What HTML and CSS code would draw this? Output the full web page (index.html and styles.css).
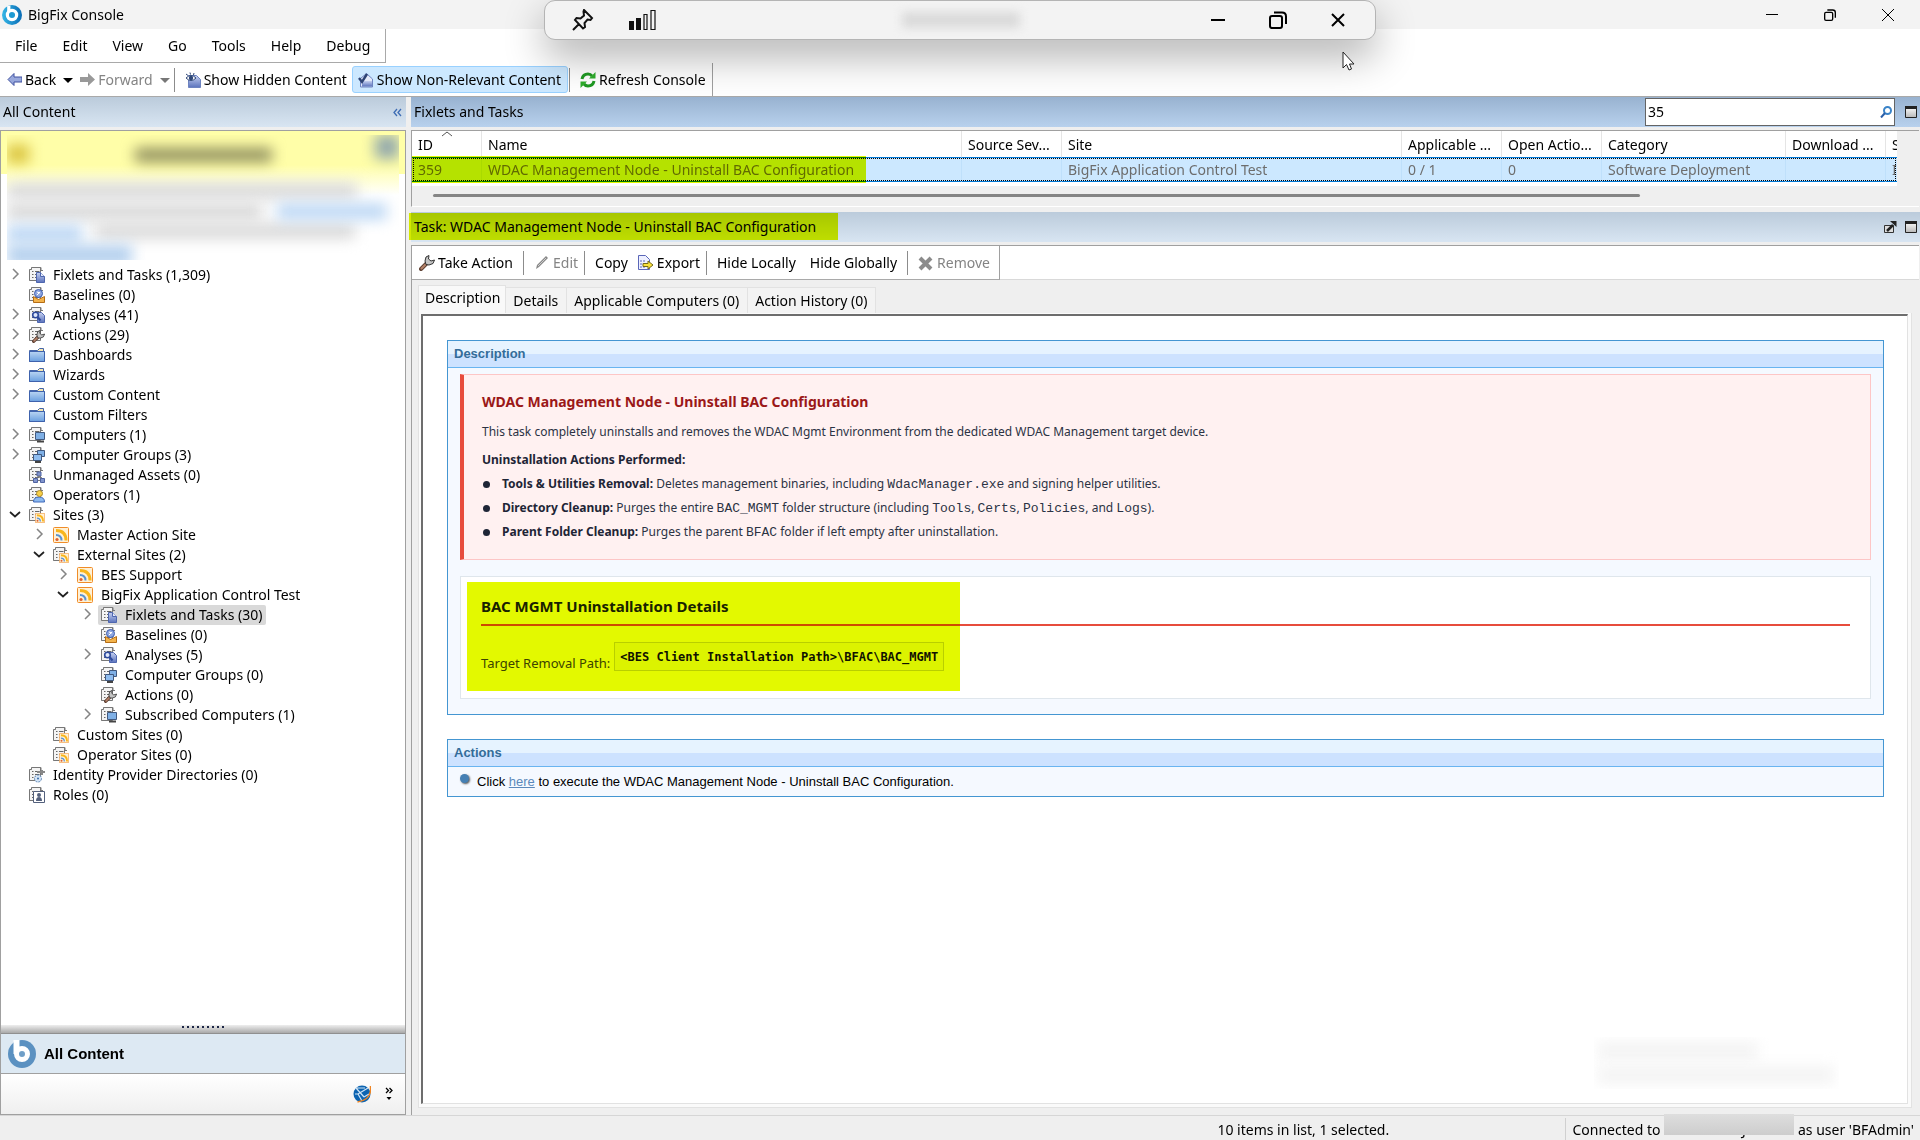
FILE: index.html
```html
<!DOCTYPE html>
<html lang="en">
<head>
<meta charset="utf-8">
<title>BigFix Console</title>
<link rel="stylesheet" href="styles.css">
</head>
<body>
<svg class="sprite" aria-hidden="true">
  <defs>
    <linearGradient id="g-blue" x1="0" y1="0" x2="0" y2="1"><stop offset="0" stop-color="#b9d5f3"/><stop offset="1" stop-color="#6a9fdf"/></linearGradient>
    <linearGradient id="g-page" x1="0" y1="0" x2="0" y2="1"><stop offset="0" stop-color="#c5d0f0"/><stop offset="1" stop-color="#5b73bd"/></linearGradient>
    <linearGradient id="g-logo" x1="0" y1="0" x2="1" y2="0"><stop offset="0" stop-color="#35b6e6"/><stop offset="1" stop-color="#0a6cb5"/></linearGradient>
    <linearGradient id="g-win" x1="0" y1="0" x2="0" y2="1"><stop offset="0" stop-color="#fff"/><stop offset="1" stop-color="#b8b8b8"/></linearGradient>
  </defs>
  <symbol id="list" viewBox="0 0 16 16">
    <path d="M1 14V2.500H3V.5h9v3h2" fill="none" stroke="#777"/>
    <path d="M.5 2.500h2v-2h9v13H.5z" fill="#f4f4f4" stroke="#777"/>
    <path d="M3 4.500h1.500M6 4.500h4.500M3 7.500h1.500M6 7.500h4.500M3 10.500h1.500M6 10.500h4.500" stroke="#666"/>
  </symbol>
  <symbol id="fixlet" viewBox="0 0 16 16"><use href="#list"/><path d="M7.500 5.500h4l4 4v6h-8z" fill="url(#g-page)" stroke="#4e66ae"/><path d="M11.500 5.500v4h4" fill="#e5ebfb" stroke="#4e66ae"/></symbol>
  <symbol id="baseline" viewBox="0 0 16 16"><use href="#list"/><circle cx="9.500" cy="6.500" r="4" fill="#8ea6df" stroke="#3e5eb0"/><path d="M8 5l3 1M8 8l3-3" stroke="#fff"/><path d="M4.500 9.500l5 3 6-3v6h-11z" fill="#f3b34b" stroke="#b56d15"/></symbol>
  <symbol id="analysis" viewBox="0 0 16 16"><use href="#list"/><path d="M8.500 5.500h4l3 3v7h-7z" fill="url(#g-page)" stroke="#4e66ae"/><circle cx="6.500" cy="8" r="2.800" fill="#dfe8fb" stroke="#2f4b9c" stroke-width="1.600"/><path d="M8.500 10l3 3.500" stroke="#2f4b9c" stroke-width="2"/></symbol>
  <symbol id="wrench" viewBox="0 0 16 16"><path d="M2 14l6-6" stroke="#5d3f31" stroke-width="4" stroke-linecap="round"/><path d="M2.500 13.500l5-5" stroke="#b5826a" stroke-width="2" stroke-linecap="round"/><path d="M7 9.500L6 6l1-4 3-1.500L9.500 4l2.500 2 3.500-1L14 8.500l-4 1.500z" fill="#c4c4c4" stroke="#333"/></symbol>
  <symbol id="action" viewBox="0 0 16 16"><use href="#list"/><use href="#wrench" x="3" y="3" width="13" height="13"/></symbol>
  <symbol id="folder" viewBox="0 0 16 16"><path d="M.5 3.500h8l2-2h4v3h1v10H.5z" fill="#f5e6b0" stroke="#4465a8"/><path d="M.5 4.500h15v10H.5z" fill="url(#g-blue)" stroke="#3e62ad"/></symbol>
  <symbol id="computer" viewBox="0 0 16 16"><use href="#list"/><path d="M6.500 5.500h9v7h-9z" fill="#7fb0e6" stroke="#41597f"/><path d="M8 14.500h7" stroke="#444" stroke-width="2"/></symbol>
  <symbol id="group" viewBox="0 0 16 16"><use href="#list"/><path d="M8.500 3.500h7v6h-7z" fill="#7fb0e6" stroke="#41597f"/><path d="M4.500 7.500h8v6h-8z" fill="#8fbdf0" stroke="#41597f"/><path d="M6 15h6" stroke="#444" stroke-width="2"/></symbol>
  <symbol id="asset" viewBox="0 0 16 16"><use href="#list"/><path d="M8 5h4v4H8zM4.500 11.500h4v4h-4zM11.500 11.500h4v4h-4z" fill="#8094cd" stroke="#5064a2"/><path d="M10 9v2M7 11l3-2 3 2" stroke="#777" fill="none"/></symbol>
  <symbol id="operator" viewBox="0 0 16 16"><use href="#list"/><path d="M4.500 15q0-5 5.500-5t5.500 5z" fill="#8cb9ef" stroke="#3f69ba"/><circle cx="10.500" cy="6.500" r="3" fill="#f8cf45" stroke="#a8892c"/></symbol>
  <symbol id="feed" viewBox="0 0 16 16"><rect x=".5" y=".5" width="15" height="15" rx="1" fill="#fff1d6" stroke="#f08c28"/><path d="M3 3.500q10 0 10 10" stroke="#f9b61b" stroke-width="3" fill="none"/><path d="M3 8q5.500 0 5.500 5.500" stroke="#5b93cf" stroke-width="2" fill="none"/><circle cx="4" cy="12.500" r="1.600" fill="#df6030"/></symbol>
  <symbol id="site" viewBox="0 0 16 16"><use href="#list"/><use href="#feed" x="6" y="6" width="10" height="10"/></symbol>
  <symbol id="directory" viewBox="0 0 16 16"><use href="#list"/><path d="M8 5h8M13 3v5" stroke="#888" stroke-width="2"/><circle cx="9" cy="11.500" r="3.500" fill="#d5e5f7" stroke="#557fb0" stroke-dasharray="2 1"/><circle cx="9" cy="11.500" r="1" fill="#3a6ca8"/></symbol>
  <symbol id="role" viewBox="0 0 16 16"><use href="#list"/><path d="M4.500 4.500h11v11h-11z" fill="#fff" stroke="#53607c"/><circle cx="10" cy="8" r="2" fill="#53607c"/><path d="M7 14q0-4 3-4t3 4z" fill="#53607c"/></symbol>
  <symbol id="right" viewBox="0 0 18 18"><path d="M7 4l5 5-5 5" fill="none" stroke="#858585" stroke-width="1.500"/></symbol>
  <symbol id="down" viewBox="0 0 18 18"><path d="M4 7l5 4.500L14 7" fill="none" stroke="#222" stroke-width="1.700"/></symbol>
  <symbol id="logo" viewBox="0 0 28 28"><circle cx="14" cy="14" r="14" fill="url(#g-logo)"/><path d="M9.500 1v13" stroke="#fff" stroke-width="4.500"/><circle cx="14" cy="14" r="6.500" fill="#1f9ad2" stroke="#fff" stroke-width="4.500"/></symbol>
  <symbol id="logo2" viewBox="0 0 28 28"><circle cx="14" cy="14" r="14" fill="#5b91c1"/><path d="M8.500 0v14" stroke="#fff" stroke-width="6"/><circle cx="14" cy="14" r="5.500" fill="#6f9fc8" stroke="#fff" stroke-width="5"/></symbol>
  <symbol id="eye-page" viewBox="0 0 16 16"><path d="M3.500 3.500h8l4 4v8h-12z" fill="url(#g-page)" stroke="#6d83c0"/><path d="M1 6q5-5 10 0-5 5-10 0z" fill="#fff" stroke="#2f4778"/><circle cx="6" cy="6" r="2.200" fill="#2f4778"/><path d="M1 2l2 1.500M5 .5l.5 2M9 1l-.5 2" stroke="#2f4778"/></symbol>
  <symbol id="check-page" viewBox="0 0 16 16"><path d="M2.500 6.500l6-5 6 5.500v8h-12z" fill="#e4eaf9" stroke="#6d83c0"/><path d="M4 9h10v5.500H4z" fill="url(#g-page)"/><path d="M1 6l3 4 5-8" fill="none" stroke="#2e4374" stroke-width="2.400"/></symbol>
  <symbol id="refresh" viewBox="0 0 16 16"><path d="M2 7q1-5 6-5 2.500 0 4 2M14 9q-1 5-6 5-2.500 0-4-2" fill="none" stroke="#1f9a22" stroke-width="3"/><path d="M9 6.500h6.500V0zM7 9.500H.5V16z" fill="#2fae2c"/></symbol>
  <symbol id="window" viewBox="0 0 12 12"><path d="M.5.5h11v11H.5z" fill="url(#g-win)" stroke="#222"/><path d="M0 1.500h12" stroke="#222" stroke-width="3"/></symbol>
  <symbol id="restore" viewBox="0 0 18 18"><rect x="1" y="5" width="12" height="12" rx="2" fill="none" stroke="currentColor" stroke-width="2"/><path d="M5 1.500h8q4 0 4 4V13" fill="none" stroke="currentColor" stroke-width="2"/></symbol>
  <symbol id="close" viewBox="0 0 14 14"><path d="M1 1l12 12M13 1L1 13" fill="none" stroke="currentColor" stroke-width="2"/></symbol>
</svg>

<header class="titlebar">
  <svg class="app-logo"><use href="#logo"/></svg>
  <span class="app-name">BigFix Console</span>
  <div class="caption">
    <button aria-label="Minimize"><svg width="12" height="12"><path d="M0 5.500h12" stroke="#000"/></svg></button>
    <button aria-label="Restore"><svg width="12" height="12"><use href="#restore"/></svg></button>
    <button aria-label="Close"><svg width="12" height="12" viewBox="0 0 12 12"><path d="M0 0l12 12M12 0L0 12" stroke="#000"/></svg></button>
  </div>
</header>

<nav class="menu">
  <button>File</button><button>Edit</button><button>View</button><button>Go</button><button>Tools</button><button>Help</button><button>Debug</button>
</nav>

<div class="toolrow">
  <div class="toolbar">
    <button class="back"><svg class="i15"><path d="M1 7.500L7 1.500V5h8v5H7v3.500z" fill="#98a8dc" stroke="#3f51a0"/></svg>Back<svg class="caret"><path d="M0 1h10L5 6z"/></svg></button>
    <button class="forward" disabled><svg class="i15"><path d="M15 7.500L8 1v4H0v5h8v4z" fill="#999"/></svg>Forward<svg class="caret"><path d="M0 1h10L5 6z" fill="#777"/></svg></button>
    <i class="sep"></i>
    <button><svg class="i16"><use href="#eye-page"/></svg>Show Hidden Content</button>
    <button class="on"><svg class="i16"><use href="#check-page"/></svg>Show Non-Relevant Content</button>
    <i class="sep"></i>
    <button><svg class="i16"><use href="#refresh"/></svg>Refresh Console</button>
  </div>
</div>

<main class="panes">
  <aside class="side">
    <div class="pane-head">
      <h2>All Content</h2>
      <button aria-label="Collapse"><svg width="9" height="9"><path d="M4 1L1 4.500 4 8M8 1L5 4.500 8 8" fill="none" stroke="#3d6cb4" stroke-width="1.300"/></svg></button>
    </div>
    <div class="side-panel">
      <div class="notice">
        <div class="smear">
          <i class="warn"></i><i class="heading"></i><i class="badge"></i>
          <i class="t1"></i><i class="t2"></i><i class="t3"></i><i class="l1"></i><i class="l2"></i><i class="l3"></i>
        </div>
      </div>
      <ul class="tree">
        <li><div class="node"><svg class="arrow"><use href="#right"/></svg><span><svg class="i16"><use href="#fixlet"/></svg>Fixlets and Tasks (1,309)</span></div></li>
        <li><div class="node leaf"><span><svg class="i16"><use href="#baseline"/></svg>Baselines (0)</span></div></li>
        <li><div class="node"><svg class="arrow"><use href="#right"/></svg><span><svg class="i16"><use href="#analysis"/></svg>Analyses (41)</span></div></li>
        <li><div class="node"><svg class="arrow"><use href="#right"/></svg><span><svg class="i16"><use href="#action"/></svg>Actions (29)</span></div></li>
        <li><div class="node"><svg class="arrow"><use href="#right"/></svg><span><svg class="i16"><use href="#folder"/></svg>Dashboards</span></div></li>
        <li><div class="node"><svg class="arrow"><use href="#right"/></svg><span><svg class="i16"><use href="#folder"/></svg>Wizards</span></div></li>
        <li><div class="node"><svg class="arrow"><use href="#right"/></svg><span><svg class="i16"><use href="#folder"/></svg>Custom Content</span></div></li>
        <li><div class="node leaf"><span><svg class="i16"><use href="#folder"/></svg>Custom Filters</span></div></li>
        <li><div class="node"><svg class="arrow"><use href="#right"/></svg><span><svg class="i16"><use href="#computer"/></svg>Computers (1)</span></div></li>
        <li><div class="node"><svg class="arrow"><use href="#right"/></svg><span><svg class="i16"><use href="#group"/></svg>Computer Groups (3)</span></div></li>
        <li><div class="node leaf"><span><svg class="i16"><use href="#asset"/></svg>Unmanaged Assets (0)</span></div></li>
        <li><div class="node leaf"><span><svg class="i16"><use href="#operator"/></svg>Operators (1)</span></div></li>
        <li><div class="node"><svg class="arrow"><use href="#down"/></svg><span><svg class="i16"><use href="#site"/></svg>Sites (3)</span></div>
          <ul>
            <li><div class="node"><svg class="arrow"><use href="#right"/></svg><span><svg class="i16"><use href="#feed"/></svg>Master Action Site</span></div></li>
            <li><div class="node"><svg class="arrow"><use href="#down"/></svg><span><svg class="i16"><use href="#site"/></svg>External Sites (2)</span></div>
              <ul>
                <li><div class="node"><svg class="arrow"><use href="#right"/></svg><span><svg class="i16"><use href="#feed"/></svg>BES Support</span></div></li>
                <li><div class="node"><svg class="arrow"><use href="#down"/></svg><span><svg class="i16"><use href="#feed"/></svg>BigFix Application Control Test</span></div>
                  <ul>
                    <li><div class="node"><svg class="arrow"><use href="#right"/></svg><span class="selected"><svg class="i16"><use href="#fixlet"/></svg>Fixlets and Tasks (30)</span></div></li>
                    <li><div class="node leaf"><span><svg class="i16"><use href="#baseline"/></svg>Baselines (0)</span></div></li>
                    <li><div class="node"><svg class="arrow"><use href="#right"/></svg><span><svg class="i16"><use href="#analysis"/></svg>Analyses (5)</span></div></li>
                    <li><div class="node leaf"><span><svg class="i16"><use href="#group"/></svg>Computer Groups (0)</span></div></li>
                    <li><div class="node leaf"><span><svg class="i16"><use href="#action"/></svg>Actions (0)</span></div></li>
                    <li><div class="node"><svg class="arrow"><use href="#right"/></svg><span><svg class="i16"><use href="#computer"/></svg>Subscribed Computers (1)</span></div></li>
                  </ul>
                </li>
              </ul>
            </li>
            <li><div class="node leaf"><span><svg class="i16"><use href="#site"/></svg>Custom Sites (0)</span></div></li>
            <li><div class="node leaf"><span><svg class="i16"><use href="#site"/></svg>Operator Sites (0)</span></div></li>
          </ul>
        </li>
        <li><div class="node leaf"><span><svg class="i16"><use href="#directory"/></svg>Identity Provider Directories (0)</span></div></li>
        <li><div class="node leaf"><span><svg class="i16"><use href="#role"/></svg>Roles (0)</span></div></li>
      </ul>
      <div class="grip"><i></i></div>
      <button class="domain"><svg width="28" height="28"><use href="#logo2"/></svg>All Content</button>
      <div class="tray">
        <button aria-label="Domain"><svg width="18" height="18" viewBox="0 0 18 18"><circle cx="9" cy="9" r="8.500" fill="#0d64b1"/><path d="M3 3l8 9M15 3L5 9l4 7M2 9l3 0M11 12l5-3M3 3l9 0" stroke="#cfe4f6" fill="none" stroke-width="1.200"/><path d="M17.500 1v5q-1 9-13 11" fill="none" stroke="#ef8523" stroke-width="1.500"/></svg></button>
        <button aria-label="More"><svg width="8" height="14"><path d="M1 1l2.500 2.500L1 6M4.500 1L7 3.500 4.500 6" fill="none" stroke="#000" stroke-width="1.300"/><path d="M1.500 10h5L4 13z"/></svg></button>
      </div>
    </div>
  </aside>

  <section class="work">
    <div class="pane-head active">
      <h2>Fixlets and Tasks</h2>
      <label class="search"><input type="text" value="35" aria-label="Search"><svg width="12" height="12"><circle cx="7.500" cy="4.500" r="3.500" fill="none" stroke="#3a83c8" stroke-width="2"/><path d="M5 7L1 11.500" stroke="#2b5fa8" stroke-width="2"/></svg></label>
      <button aria-label="Maximize list"><svg width="12" height="12"><use href="#window"/></svg></button>
    </div>
    <div class="list-panel">
      <table class="list">
        <colgroup><col class="c-id"><col class="c-name"><col class="c-m"><col><col class="c-m"><col class="c-m"><col class="c-cat"><col class="c-m"><col class="c-last"></colgroup>
        <thead><tr><th>ID<svg class="sort"><path d="M0 5l5-4 5 4" fill="none" stroke="#555"/></svg></th><th>Name</th><th>Source Sev...</th><th>Site</th><th>Applicable ...</th><th>Open Actio...</th><th>Category</th><th>Download ...</th><th>S</th></tr></thead>
        <tbody><tr><td>359</td><td>WDAC Management Node - Uninstall BAC Configuration</td><td></td><td>BigFix Application Control Test</td><td>0 / 1</td><td>0</td><td>Software Deployment</td><td></td><td>I</td></tr></tbody>
      </table>
      <div class="scroll"><i></i></div>
    </div>

    <div class="pane-head task-head">
      <h2>Task: WDAC Management Node - Uninstall BAC Configuration</h2>
      <button aria-label="Open in window"><svg width="13" height="12"><path d="M.5 4.500h9v7h-9z" fill="#ddd" stroke="#333"/><path d="M3 10l6-6" stroke="#222" stroke-width="2.500"/><path d="M6 0h6.500v6z" fill="#222"/></svg></button>
      <button aria-label="Maximize task"><svg width="12" height="12"><use href="#window"/></svg></button>
    </div>
    <div class="task-panel">
      <div class="toolrow">
        <div class="toolbar task-tools">
          <button class="wide"><svg class="i16"><use href="#wrench"/></svg>Take Action</button>
          <i class="sep"></i>
          <button disabled><svg class="i16"><path d="M2 14l1-4 9-9 2 2-9 9z" fill="#888"/><path d="M4 11l8-8" stroke="#ccc"/></svg>Edit</button>
          <i class="sep"></i>
          <button>Copy</button>
          <button><svg class="i16"><path d="M.5.5h7l4 4v10H.5z" fill="#eef0ff" stroke="#5a66b8"/><path d="M2 6h6M2 9h6M2 12h6" stroke="#5a66b8" stroke-dasharray="2 1"/><path d="M5 8.500h5V6l5 4-5 4v-2.500H5z" fill="#f8e13a" stroke="#74681a"/></svg>Export</button>
          <i class="sep"></i>
          <button class="wide">Hide Locally</button>
          <button class="wide">Hide Globally</button>
          <i class="sep"></i>
          <button disabled><svg class="i16"><path d="M2 3l11 11M13 3L2 14" stroke="#8b8b8b" stroke-width="4"/></svg>Remove</button>
        </div>
      </div>
      <div class="tabs">
        <button class="current">Description</button><button>Details</button><button>Applicable Computers (0)</button><button>Action History (0)</button>
      </div>
      <div class="frame">
        <div class="doc">
          <section class="box">
            <h3>Description</h3>
            <div class="box-body">
              <article class="alert">
                <h4>WDAC Management Node - Uninstall BAC Configuration</h4>
                <p>This task completely uninstalls and removes the WDAC Mgmt Environment from the dedicated WDAC Management target device.</p>
                <p class="lead">Uninstallation Actions Performed:</p>
                <ul>
                  <li><b>Tools &amp; Utilities Removal:</b> Deletes management binaries, including <code>WdacManager.exe</code> and signing helper utilities.</li>
                  <li><b>Directory Cleanup:</b> Purges the entire <code>BAC_MGMT</code> folder structure (including <code>Tools</code>, <code>Certs</code>, <code>Policies</code>, and <code>Logs</code>).</li>
                  <li><b>Parent Folder Cleanup:</b> Purges the parent <code>BFAC</code> folder if left empty after uninstallation.</li>
                </ul>
              </article>
              <article class="details">
                <h4>BAC MGMT Uninstallation Details</h4>
                <div class="path"><span>Target Removal Path:</span><code>&lt;BES Client Installation Path&gt;\BFAC\BAC_MGMT</code></div>
              </article>
            </div>
          </section>
          <section class="box">
            <h3>Actions</h3>
            <div class="action"><i></i><p>Click <a href="#">here</a> to execute the WDAC Management Node - Uninstall BAC Configuration.</p></div>
          </section>
          <div class="ghost"><i></i><i></i></div>
        </div>
      </div>
    </div>
  </section>
</main>

<footer class="status">
  <span class="count">10 items in list, 1 selected.</span>
  <span class="conn">Connected to <span class="host">'WIN-0KRPSJEDTEU'</span> as user 'BFAdmin'</span>
</footer>

<div class="remote">
  <svg class="pin" viewBox="0 0 22 22"><path d="M12 1l8 8-1.500 2-3-.5-3 3.500.5 4-2 1.500L3 11l1.500-2 4 .5 3.500-3-.5-4zM7 15l-6 6" fill="none" stroke="#111" stroke-width="2"/></svg>
  <svg class="signal" viewBox="0 0 27 20"><path d="M0 11h5v9H0zM7 8h5v12H7z" fill="#111"/><path d="M15 4.500h3v15h-3zM22 .5h4v19h-4z" fill="none" stroke="#111" stroke-width="1.200"/></svg>
  <i class="name"></i>
  <button aria-label="Minimize session"><svg width="14" height="18"><path d="M0 9h14" stroke="#000" stroke-width="2"/></svg></button>
  <button aria-label="Restore session"><svg width="18" height="18"><use href="#restore"/></svg></button>
  <button aria-label="Close session"><svg width="14" height="14"><use href="#close"/></svg></button>
</div>
<svg class="cursor" viewBox="0 0 13 20"><path d="M1 1v16l3.500-3.500L7 19l2.500-1-2-5H12z" fill="#fff" stroke="#222"/></svg>
</body>
</html>
```
FILE: styles.css
```css
* { box-sizing: border-box; }
body {
  margin: 0;
  min-height: 100vh;
  display: flex;
  flex-direction: column;
  background: #fff;
  color: #000;
  font: 14px/20px "Noto Sans", "Open Sans", sans-serif;
  position: relative;
}
h2, h3, h4, p, ul { margin: 0; padding: 0; }
ul { list-style: none; }
button { margin: 0; padding: 0; border: 0; background: none; font: inherit; color: inherit; white-space: nowrap; }
svg { display: block; flex: none; }
.sprite { position: absolute; width: 0; height: 0; }
.i15 { width: 15px; height: 15px; }
.i16 { width: 16px; height: 16px; }

/* window chrome */
.titlebar { display: flex; align-items: center; height: 29px; padding-left: 2px; background: #f3f3f3; }
.app-logo { width: 20px; height: 20px; }
.app-name { margin-left: 6px; }
.caption { display: flex; margin-left: auto; padding-right: 3px; }
.caption button { width: 58px; height: 29px; display: flex; align-items: center; justify-content: center; }
.menu { display: flex; align-self: flex-start; height: 34px; padding: 1px 3px 0 2px; border-right: 1px solid #a9a9a9; border-bottom: 1px solid #a9a9a9; }
.menu button { padding: 0 12px 0 13px; }

.toolrow { display: flex; height: 34px; border-bottom: 1px solid #a9a9a9; }
.toolbar { display: flex; align-items: center; padding: 0 1px 0 2px; border-right: 1px solid #a0a0a0; }
.toolbar button { display: flex; align-items: center; gap: 3px; height: 27px; padding: 0 4px; border: 1px solid transparent; border-radius: 3px; }
.toolbar button:disabled { color: #848484; }
.toolbar .on { padding: 0 6px 0 5px; background: #cce8ff; border-color: #99d1ff; }
.toolbar .wide { padding-right: 8px; }
.toolbar .caret { width: 10px; height: 6px; margin-left: 4px; }
.toolbar .back { padding-right: 0; }
.toolbar .forward { padding-right: 2px; margin-left: 1px; }
.sep { width: 1px; height: 24px; margin: 0 5px 0 1px; background: #8c8c8c; }

/* panes */
.panes { flex: 1; display: grid; grid-template-columns: 406px minmax(0, 1fr); gap: 5px; background: #efefef; }
.side, .work { display: flex; flex-direction: column; min-width: 0; }
.pane-head { display: flex; align-items: center; height: 30px; padding: 0 3px; background: linear-gradient(#bbcbdb, #d8e5f2); }
.pane-head h2 { font-size: 14px; font-weight: 400; margin-right: auto; white-space: nowrap; }
.active { background: linear-gradient(#98b2d0, #b8d1ed); }
.side .pane-head { padding-right: 4px; }
.side-panel { flex: 1; display: flex; flex-direction: column; margin-top: 3px; border: 1px solid #a0a0a0; background: #fff; }

/* redacted notice */
.notice { height: 134px; padding: 4px 6px; background: linear-gradient(#ffffa8 43px, #fff 43px); }
.smear { position: relative; height: 125px; overflow: hidden; background: linear-gradient(#fffea8 30px, #fff 60px); }
.smear i { position: absolute; filter: blur(7px); background: #dadada; }
.smear .warn { left: 0; top: 10px; width: 22px; height: 18px; background: #d9c23c; }
.smear .heading { left: 128px; top: 13px; width: 137px; height: 14px; background: #8f8e5e; }
.smear .badge { right: 0; top: 0; width: 24px; height: 24px; background: #93a9ac; }
.smear .t1 { left: 0; top: 48px; width: 350px; height: 16px; }
.smear .t2 { left: 0; top: 68px; width: 255px; height: 17px; }
.smear .t3 { left: 88px; top: 88px; width: 260px; height: 16px; }
.smear .l1 { left: 270px; top: 68px; width: 110px; height: 17px; background: #bfd9f5; }
.smear .l2 { left: 0; top: 90px; width: 75px; height: 18px; background: #bfd9f5; }
.smear .l3 { left: 0; top: 110px; width: 125px; height: 20px; background: #b4d0ee; }

/* tree */
.tree { flex: 1; }
.tree ul { padding-left: 24px; }
.node { display: flex; height: 20px; padding-left: 5px; }
.node .arrow { width: 18px; height: 18px; }
.node span { display: flex; align-items: center; gap: 8px; margin-left: 2px; padding: 0 4px 0 3px; border-radius: 2px; white-space: nowrap; }
.node.leaf { padding-left: 23px; }
.node .selected { background: #d9d9d9; }
.grip { display: flex; justify-content: center; height: 9px; border-bottom: 1px solid #909090; background: linear-gradient(#eee, #a9a9a9); }
.grip i { width: 43px; height: 2px; margin-top: 1px; background: repeating-linear-gradient(90deg, #1d2746 0 2px, transparent 2px 5px); }
.domain { display: flex; align-items: center; gap: 8px; height: 40px; padding: 0 7px; border-bottom: 1px solid #a0a0a0; background: #dde9f3; font: bold 15px/20px "Liberation Sans", Arial, sans-serif; }
.tray { display: flex; align-items: center; justify-content: flex-end; gap: 14px; height: 40px; padding-right: 12px; background: linear-gradient(#fff, #efefef); }

/* list */
.search { display: flex; align-items: center; width: 250px; height: 28px; padding: 0 2px; margin-right: 10px; border: 1px solid #646464; background: #fff; }
.search input { flex: 1; min-width: 0; height: 24px; padding: 0 0 2px; border: 0; outline: 0; font: inherit; background: none; }
.list-panel { position: relative; margin: 3px 1px 0 0; height: 77px; border: 1px solid #a0a0a0; border-right: 0; border-bottom-color: #fff; }
.list-panel::after { content: ""; position: absolute; left: 0; top: 25px; width: 454px; height: 27px; background: #e3f900; mix-blend-mode: multiply; }
.list { width: calc(100% - 22px); table-layout: fixed; border-collapse: separate; border-spacing: 0; background: #fff; border-bottom: 4px solid #fff; }
.list th, .list td { height: 25px; padding: 0 0 0 6px; font-weight: 400; text-align: left; white-space: nowrap; overflow: hidden; border-right: 1px solid #e5e5e5; }
.list th { position: relative; height: 26px; padding-top: 2px; }
.list td { color: #6d6d6d; background: #cce8ff; border-top: 1px solid #0078d7; border-bottom: 1px solid #0078d7; border-right-color: #bfe0fb; }
.list tbody tr { outline: 1px dotted #000; outline-offset: -2px; }
.list th:last-child, .list td:last-child { border-right: 0; }
.c-id { width: 70px; }
.c-name { width: 480px; }
.c-m { width: 100px; }
.c-cat { width: 184px; }
.c-last { width: 11px; }
.sort { position: absolute; left: 30px; top: 0; width: 11px; height: 6px; }
.scroll { padding: 8px 279px 0 21px; }
.scroll i { display: block; height: 3px; border-radius: 2px; background: #858585; }

/* task */
.task-head { position: relative; margin-top: 5px; }
.task-head::after { content: ""; position: absolute; left: -2px; top: 1px; width: 429px; height: 27px; background: #e3f900; mix-blend-mode: multiply; }
.task-head button + button { margin-left: 8px; }
.task-panel { flex: 1; display: flex; flex-direction: column; margin: 3px 1px 0 0; border-top: 1px solid #a0a0a0; border-left: 1px solid #a0a0a0; }
.task-panel .toolrow { background: #fff; border-bottom-color: #d9d9d9; }
.task-tools { border-bottom: 1px solid #a9a9a9; height: 34px; padding-right: 4px; }
.tabs { display: flex; align-items: flex-end; height: 33px; padding-left: 6px; }
.tabs button { height: 26px; padding: 0 8px 0 7px; border: 1px solid #e2e2e2; border-left: 0; border-bottom: 0; background: #f3f3f3; }
.tabs .current { height: 28px; padding: 0 5px 3px 6px; border-left: 1px solid #e2e2e2; background: #f9f9f9; }
.frame { flex: 1; display: flex; margin: 0 7px 7px 6px; padding: 1px 3px 3px 2px; border: 1px solid #e2e2e2; border-top: 0; background: #fafafa; }
.doc { position: relative; flex: 1; min-width: 0; padding: 24px 23px 0 24px; border: 1px solid #e2e2e2; border-top: 2px solid #6d6d6d; border-left: 2px solid #6d6d6d; background: #fff; }
.box { border: 1px solid #4496d2; background: #f5f9ff; margin-bottom: 24px; }
.box h3 { height: 27px; padding-left: 6px; border-bottom: 1px solid #69b4f0; background: linear-gradient(#e6f3ff 13px, #cde2ff 13px); color: #336c99; font: bold 13px/25px "Liberation Sans", Arial, sans-serif; }
.box-body { display: grid; gap: 16px; padding: 6px 12px 15px; }
.alert { padding: 16px 16px 15px 18px; border: 1px solid #fdc6c6; border-left: 4px solid #e74c3c; background: #fff1f1; color: #2c3344; font-size: 12px; line-height: 24px; }
.alert h4 { color: #9b1818; font-size: 14px; line-height: 22px; margin-bottom: 7px; }
.alert .lead { font-weight: 700; margin: 4px 0 0; color: #1e2536; }
.alert li { position: relative; padding-left: 20px; }
.alert li::before { content: ""; position: absolute; left: 1px; top: 9px; width: 7px; height: 7px; border-radius: 50%; background: #1e2536; }
.alert code { font: 13px/20px "Liberation Mono", "Courier New", monospace; }
.alert b { color: #1e2536; }
.details { position: relative; height: 123px; padding: 17px 20px 0; border: 1px solid #dfe6ec; background: #fff; }
.details::after { content: ""; position: absolute; left: 6px; top: 5px; width: 493px; height: 109px; background: #e3f900; mix-blend-mode: multiply; }
.details h4 { height: 32px; border-bottom: 2px solid #e74c3c; color: #1b222c; font-size: 15px; line-height: 24px; }
.path { display: flex; align-items: flex-end; gap: 4px; margin-top: 16px; font-size: 13px; line-height: 16px; color: #444; }
.path code { height: 29px; padding: 0 5px; border: 1px solid #d0d4d8; background: #f8f9fa; color: #111; font: bold 12px/29px "DejaVu Sans Mono", monospace; }
.action { display: flex; gap: 8px; height: 29px; padding: 7px 12px; font: 13px/15px "Liberation Sans", Arial, sans-serif; }
.action i { width: 9px; height: 9px; border-radius: 50%; background: #4580b4; box-shadow: 1px 1px 2px #555; }
.action a { color: #5b89bb; }
.ghost { position: absolute; right: 68px; bottom: 14px; width: 245px; height: 52px; overflow: hidden; }
.ghost i { display: block; width: 160px; height: 20px; margin: 4px; background: #f5f5f5; filter: blur(6px); }
.ghost i + i { width: 236px; }

/* status */
.status { display: flex; height: 25px; padding-right: 6px; border-top: 1px solid #d6d6d6; background: #efefef; line-height: 27px; white-space: nowrap; }
.count { margin-left: auto; width: 348px; }
.conn { padding-left: 6px; margin-top: 2px; border-left: 1px solid #d0d0d0; line-height: 23px; }
.host { position: relative; padding-right: 2px; }
.host::after { content: ""; position: absolute; left: 0; right: 0; top: -6px; height: 21px; background: linear-gradient(#dedede, #cdcdcd); }

/* remote session bar */
.remote { position: absolute; left: 0; right: 0; top: 0; margin: 0 auto; width: 832px; height: 40px; display: flex; align-items: center; padding: 0 30px 0 27px; border: 1px solid #b4b4b4; border-radius: 11px; background: #f3f3f3; box-shadow: 0 16px 40px rgba(0, 0, 0, .32); clip-path: inset(0 -90px -57px -90px); }
.pin { width: 22px; height: 22px; }
.signal { width: 27px; height: 20px; margin-left: 35px; }
.name { width: 118px; height: 16px; margin-left: 246px; margin-right: auto; background: #dadada; filter: blur(5px); }
.remote button { width: 60px; display: flex; justify-content: center; }
.remote button:last-child { margin-right: -23px; }
.cursor { position: absolute; left: 1342px; top: 51px; width: 13px; height: 20px; }
```
